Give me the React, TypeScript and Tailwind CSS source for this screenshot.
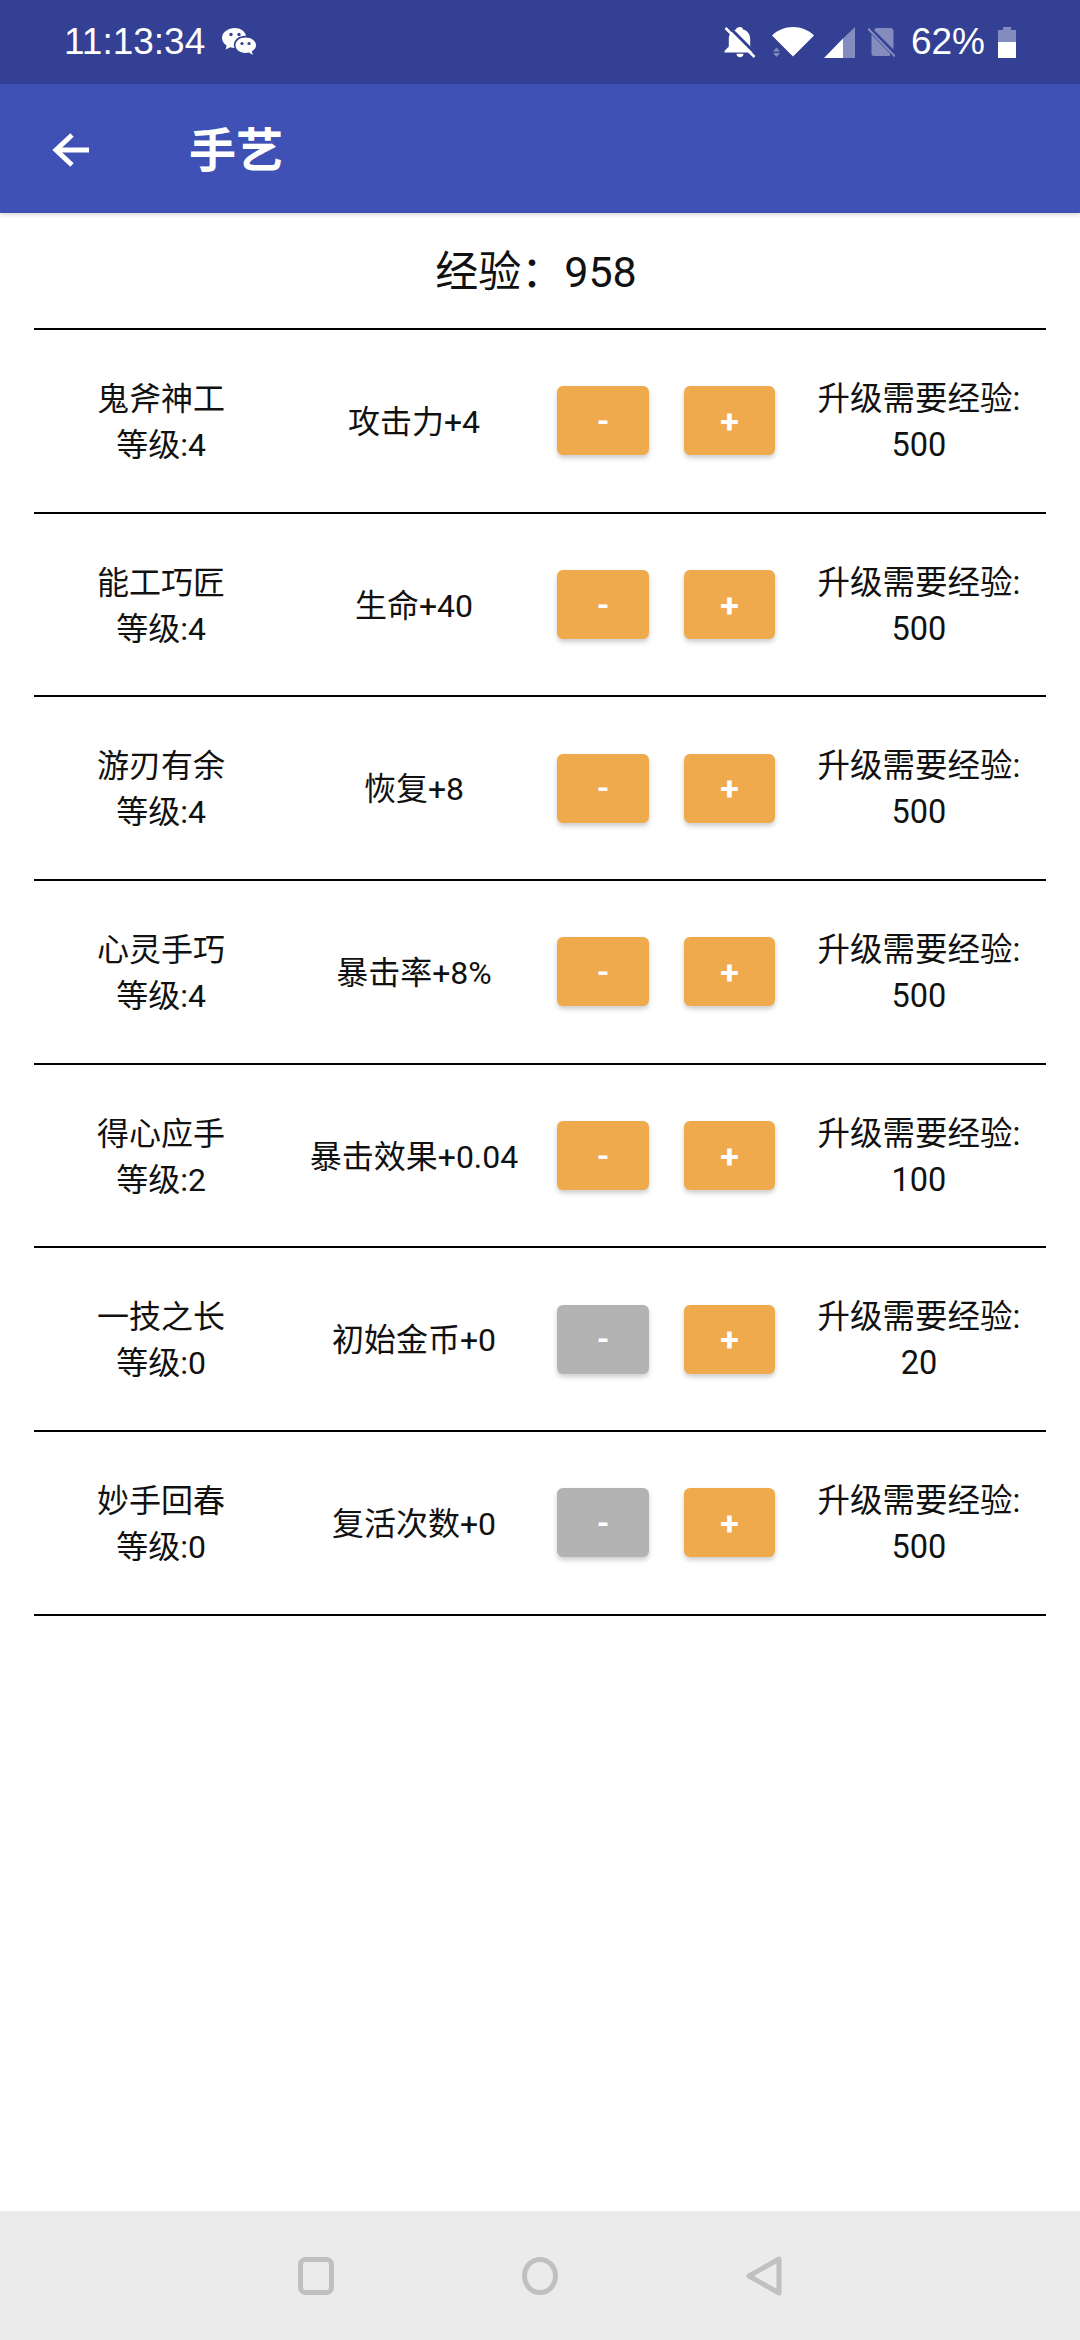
const skills = [
  { name: "鬼斧神工", level: 4, effect: "攻击力+4", cost: 500 },
  { name: "能工巧匠", level: 4, effect: "生命+40", cost: 500 },
  { name: "游刃有余", level: 4, effect: "恢复+8", cost: 500 },
  { name: "心灵手巧", level: 4, effect: "暴击率+8%", cost: 500 },
  { name: "得心应手", level: 2, effect: "暴击效果+0.04", cost: 100 },
  { name: "一技之长", level: 0, effect: "初始金币+0", cost: 20 },
  { name: "妙手回春", level: 0, effect: "复活次数+0", cost: 500 },
];

function WeChatIcon() {
  return (
    <svg width="34" height="28" viewBox="0 0 34 28" fill="white">
      <path d="M13 0C6 0 0 4.400 0 10c0 3.200 1.900 5.800 4.600 7.600L3.600 21.500l4.600-2.300c1.300.4 2.700.6 4.200.7-.3-1-.5-1.900-.5-2.900 0-5.400 5-9.300 11.300-9.300h.8C22.900 3.200 18.400 0 13 0z" />
      <path d="M23.500 9.500C17.700 9.500 13.500 13 13.500 17.200s4.200 7.700 10 7.700c1.200 0 2.300-.2 3.400-.5l3.900 2.600-.9-3.800c2.700-1.500 4.100-3.600 4.100-6 0-4.200-4.700-7.700-10.500-7.700z" />
      <circle cx="9" cy="6.500" r="1.700" fill="#334094" />
      <circle cx="17" cy="6.500" r="1.700" fill="#334094" />
      <circle cx="20" cy="15.500" r="1.600" fill="#334094" />
      <circle cx="27" cy="15.500" r="1.600" fill="#334094" />
    </svg>
  );
}

function BellOffIcon() {
  return (
    <svg width="32" height="31" viewBox="0 0 32 31" fill="white">
      <path d="M16 0c1.800 0 3 1.200 3 2.600 4.600 1.200 7.200 5 7.200 9.400v7.500l4.300 4.500v1.500H.5V24l4.300-4.500V12c0-4.400 2.600-8.200 7.200-9.400C12 1.200 14.200 0 16 0z" />
      <path d="M12.500 26.800h7c0 2-1.500 3.400-3.500 3.400s-3.500-1.400-3.500-3.400z" />
      <path d="M4 -1l29 29" stroke="#334094" strokeWidth="3" />
      <path d="M1.500 1l29 29" stroke="white" strokeWidth="2.500" />
    </svg>
  );
}

function WifiIcon() {
  return (
    <svg width="42" height="30" viewBox="0 0 42 30" fill="white">
      <path d="M0 8.500C5.500 3 13 0 21 0s15.500 3 21 8.500L21 29.500z" />
      <path d="M1 24.500l3.500-4 3.500 4zM1 26l3.500 4 3.500-4z" fillOpacity="0.4" />
    </svg>
  );
}

function SignalIcon() {
  return (
    <svg width="31" height="31" viewBox="0 0 31 31" fill="white">
      <path d="M31 0v31H19V11.500z" fillOpacity="0.4" />
      <path d="M19 11.500V31H0z" />
    </svg>
  );
}

function SimOffIcon() {
  return (
    <svg width="27" height="29" viewBox="0 0 27 29" fill="white" fillOpacity="0.4">
      <path d="M8 0h14.500c1.700 0 3 1.300 3 3v18.500L6 2z" />
      <path d="M3.500 6.500L22 25.500V28H6c-1.500 0-2.500-1-2.500-2.500z" />
      <path d="M0 0.500l27 28" stroke="white" strokeOpacity="0.4" strokeWidth="2" />
    </svg>
  );
}

function BatteryIcon() {
  return (
    <svg width="18" height="31" viewBox="0 0 18 31" fill="white">
      <path d="M5 0h8v3h5v12H0V3h5z" fillOpacity="0.4" />
      <rect x="0" y="15" width="18" height="16" />
    </svg>
  );
}

function BackArrow() {
  return (
    <svg width="37" height="34" viewBox="0 0 37 34" fill="none" stroke="white" strokeWidth="5">
      <path d="M37 17H4" />
      <path d="M20 2L4 17l16 15" />
    </svg>
  );
}

function SkillRow({ name, level, effect, cost }: (typeof skills)[number]) {
  return (
    <div className="flex h-[183.7px] items-center border-b-2 border-black text-center text-[32px] leading-[46px] text-[#111]">
      <div className="w-[254px] pt-[2px]">
        <div>{name}</div>
        <div>等级:{level}</div>
      </div>
      <div className="w-[252px] whitespace-nowrap pt-[2px]">{effect}</div>
      <div className="ml-[17px] flex items-center gap-[35px]">
        <button
          className={
            level === 0
              ? "h-[69px] w-[92px] rounded-[6px] bg-[#b3b3b3] text-[32px] font-bold text-white shadow-[0_3px_5px_rgba(0,0,0,0.2)]"
              : "h-[69px] w-[92px] rounded-[6px] bg-[#eeaa4c] text-[32px] font-bold text-white shadow-[0_3px_5px_rgba(0,0,0,0.2)]"
          }
        >
          -
        </button>
        <button className="h-[69px] w-[91px] rounded-[6px] bg-[#eeaa4c] text-[34px] font-bold text-white shadow-[0_3px_5px_rgba(0,0,0,0.2)]">
          +
        </button>
      </div>
      <div className="flex-1 whitespace-nowrap pt-[2px] pl-[17px] text-[32.5px]">
        <div>升级需要经验:</div>
        <div>{cost}</div>
      </div>
    </div>
  );
}

export default function App() {
  return (
    <div className="flex h-[2340px] w-[1080px] flex-col bg-white font-['Roboto','Noto_Sans_CJK_SC',sans-serif]">
      <div className="flex h-[84px] shrink-0 items-center bg-[#334094] px-[64px] text-white">
        <span className="font-['Liberation_Sans',sans-serif] text-[37px]">11:13:34</span>
        <span className="ml-[17px]">
          <WeChatIcon />
        </span>
        <div className="ml-auto flex items-center">
          <BellOffIcon />
          <span className="ml-[16px]">
            <WifiIcon />
          </span>
          <span className="ml-[10px]">
            <SignalIcon />
          </span>
          <span className="ml-[13px]">
            <SimOffIcon />
          </span>
          <span className="ml-[16px] font-['Liberation_Sans',sans-serif] text-[37px]">62%</span>
          <span className="ml-[13px]">
            <BatteryIcon />
          </span>
        </div>
      </div>
      <div className="flex h-[129px] shrink-0 items-center bg-[#3f51b5] pt-[3px] pl-[52px] shadow-[0_2px_4px_rgba(0,0,0,0.15)]">
        <BackArrow />
        <h1 className="ml-[100px] pt-[2px] text-[47px] font-bold text-white">手艺</h1>
      </div>
      <main className="flex-1 px-[34px]">
        <div className="flex h-[117px] items-center justify-center border-b-2 border-black pt-[4px] pr-[8px] text-[43px] text-[#111]">
          经验：958
        </div>
        {skills.map((skill) => (
          <SkillRow key={skill.name} {...skill} />
        ))}
      </main>
      <nav className="flex h-[129px] shrink-0 items-center justify-center gap-[188px] bg-[#ebebeb]">
        <svg width="36" height="38" viewBox="0 0 36 38" fill="none" stroke="#c0c0c0" strokeWidth="5">
          <rect x="2.500" y="2.500" width="31" height="33" rx="5" />
        </svg>
        <svg width="36" height="38" viewBox="0 0 36 38" fill="none" stroke="#c0c0c0" strokeWidth="5">
          <ellipse cx="18" cy="19" rx="15.500" ry="16.500" />
        </svg>
        <svg width="36" height="40" viewBox="0 0 36 40" fill="none" stroke="#c0c0c0" strokeWidth="5" strokeLinejoin="round">
          <path d="M33 3v34L3 20z" />
        </svg>
      </nav>
    </div>
  );
}
